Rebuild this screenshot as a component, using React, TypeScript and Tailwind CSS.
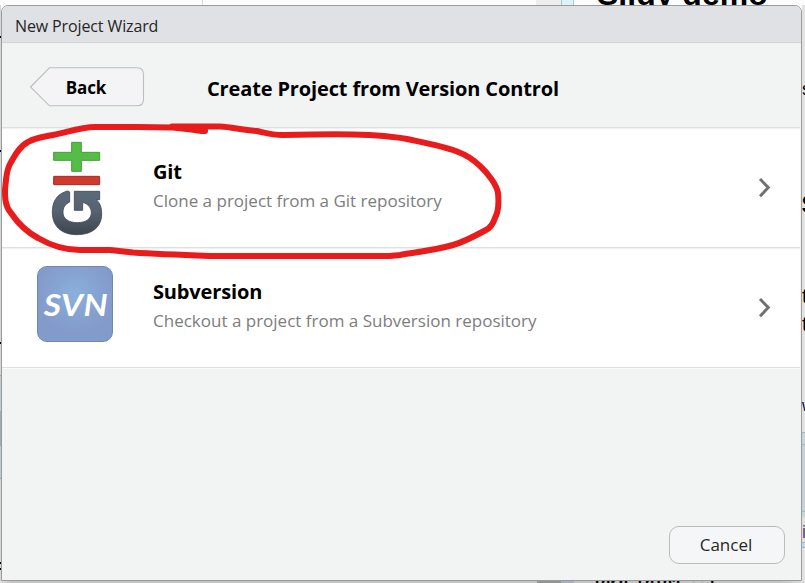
import React from "react";

function Chevron() {
  return (
    <svg width="16" height="22" viewBox="0 0 16 22" className="mr-[27px]" fill="none">
      <path d="M3 2 L11.3 10.6 L3 19.2" stroke="#6f7074" strokeWidth="2.9" />
    </svg>
  );
}

function GitIcon() {
  return (
    <svg width="75" height="105" viewBox="0 0 225 315" className="block">
      <defs>
        <linearGradient id="steel" x1="0" y1="0" x2="0" y2="1">
          <stop offset="0" stopColor="#5b6a7a" />
          <stop offset="0.45" stopColor="#566370" />
          <stop offset="1" stopColor="#3c464f" />
        </linearGradient>
      </defs>
      <path d="M95 22H124V52H179V76H124V109H95V76H41V52H95Z" fill="#55bd46" stroke="#429f35" strokeWidth="3" strokeLinejoin="round" />
      <rect x="41" y="124" width="138" height="25" rx="1" fill="#cf392e" stroke="#a52b22" strokeWidth="3" />
      <path
        d="M89 171C86 167 79 168 74 171C49 180 37 202 37 232C37 273 64 299 110 299C158 299 185 275 185 237C185 219 181 205 169 194H179V169H103V226H128V202C145 207 154 219 154 233C154 251 138 263 112 263C86 263 69 251 69 233C69 217 75 208 89 201Z"
        fill="url(#steel)" stroke="#3e4954" strokeWidth="2.5" strokeLinejoin="round"
      />
    </svg>
  );
}

function SvnIcon() {
  return (
    <div className="flex h-[76px] w-[76px] items-center justify-center rounded-[10px] border border-[#6f86ad] bg-[radial-gradient(circle_at_50%_36%,#8bb0dd_0%,#86a3d1_35%,#839bca_65%)]">
      <span className="scale-x-[1.12] pl-[2px] font-['Lato',sans-serif] text-[30px] font-bold italic leading-none tracking-[0.6px] text-white">SVN</span>
    </div>
  );
}

function Option({ icon, title, detail }: { icon: React.ReactNode; title: string; detail: string }) {
  return (
    <section className="flex h-[120px] shrink-0 items-center border-y border-b-[#dedfdf] border-t-[#f0f1f1] bg-white">
      <div className="flex h-full w-[151px] shrink-0">{icon}</div>
      <div className="flex-1 whitespace-nowrap pb-[3px]">
        <h2 className="text-[20px] font-bold leading-[28px] tracking-[-0.15px] text-black">{title}</h2>
        <p className="text-[17px] leading-[29px] text-[#7d7d7d]">{detail}</p>
      </div>
      <Chevron />
    </section>
  );
}

function TopSliver() {
  return (
    <div className="flex h-[5px] shrink-0 items-end overflow-hidden bg-[#fdfdfd]">
      <div className="h-full w-[203px] border-r border-[#d9d9d9]" />
      <div className="h-full w-[333px]" />
      <div className="h-full w-[25px] bg-[#eeeeee]" />
      <div className="h-full w-[13px] border-x border-[#a5cbd5] bg-[#def2f8]" />
      <span className="mb-[-5px] whitespace-nowrap pl-[23px] text-[32px] font-bold leading-[32px]">Slidy demo</span>
    </div>
  );
}

function LeftSliver() {
  return (
    <div className="flex w-px shrink-0 flex-col bg-[#d6d6d6]">
      <div className="h-[31px]" />
      <div className="h-[2px] bg-black" />
      <div className="h-[112px]" />
      <div className="h-[2px] bg-black" />
      <div className="h-[190px]" />
      <div className="h-[2px] bg-black" />
      <div className="h-[31px]" />
      <div className="h-[36px] border-t border-[#8fa9b8] bg-[#becbd3]" />
      <div className="h-[35px] bg-[#9eabb8]" />
      <div className="h-[33px] border-b border-[#8fa9b8] bg-[#becbd3]" />
      <div className="h-[83px]" />
      <div className="h-[2px] bg-black" />
      <div className="h-[4px]" />
      <div className="h-[2px] bg-black" />
    </div>
  );
}

function RightSliver() {
  return (
    <div className="flex w-[3px] shrink-0 flex-col overflow-hidden bg-[#e2e2e2]">
      <span className="h-[94px] pt-[74px] text-[18px] leading-[20px]">s</span>
      <span className="ml-[-1px] h-[121px] pt-[83px] text-[34px] font-bold leading-[38px]">s</span>
      <span className="h-[87px] pt-[65px] text-[20px] leading-[22px]">t</span>
      <span className="h-[28px] pt-[6px] text-[20px] leading-[22px]">t</span>
      <span className="h-[97px] pt-[62px] text-[16px] leading-[18px] text-[#000050]">w</span>
      <div className="h-[12px] border-t border-[#9dbac6] bg-[#c5d5dc]" />
      <div className="h-[68px] border-y border-[#9dbac6] bg-[#c5d0d8]" />
      <div className="h-[5px] bg-[#c5d5dc]" />
      <span className="h-[25px] bg-[#e2dfdf] pt-[5px] text-[18px] leading-[20px] text-[#6b4567]">i</span>
      <div className="h-[6px] border-y border-[#9dbac6] bg-[#c5d5dc]" />
    </div>
  );
}

function BottomSliver() {
  return (
    <div className="flex h-[2px] shrink-0 items-start overflow-hidden bg-[linear-gradient(to_right,#dedede,#c4c4c4_12px,#c4c4c4_780px,#dedede)]">
      <div className="h-full w-[537px]" />
      <div className="h-full w-[24px] bg-[#949494]" />
      <div className="h-full w-[13px] bg-[#a3b3ba]" />
      <span className="mt-[-3px] whitespace-nowrap pl-[18px] font-['Liberation_Mono',monospace] text-[16px] font-bold leading-[12px] tracking-[-0.8px]">lbrn (hiba,°°)</span>
    </div>
  );
}

function Wizard() {
  return (
    <main className="flex w-[801px] flex-col overflow-hidden rounded-t-[7px] border border-[#999b9d] bg-[#f2f4f3] pr-px font-['Open_Sans','Noto_Sans',sans-serif]">
      <header className="mr-[-1px] flex h-[37px] shrink-0 items-center border-b border-[#d2d3d6] bg-[#e0e1e5] pl-[13px] pt-[3px]">
        <span className="whitespace-nowrap text-[16px] tracking-[-0.12px] text-[#262626]">New Project Wizard</span>
      </header>
      <div className="flex h-[85px] shrink-0 items-center gap-[62px] border-b border-[#dedfdf] pl-[27px] pt-[3px]">
        <button className="grid h-[40px] w-[116px] shrink-0 place-items-center">
          <svg width="116" height="40" viewBox="0 0 116 40" className="col-start-1 row-start-1">
            <path d="M1.5 20 L20.5 0.8 H108 Q114.5 0.8 114.5 7.5 V32 Q114.5 38.8 108 38.8 H20.5 Z" fill="#f4f4f7" stroke="#bcbec0" strokeWidth="1.1" />
          </svg>
          <span className="col-start-1 row-start-1 pr-[2px] pt-[2px] text-[17px] font-bold tracking-[-0.1px] text-black">Back</span>
        </button>
        <h1 className="whitespace-nowrap pt-[5px] text-[20px] font-bold tracking-[-0.14px] text-black">Create Project from Version Control</h1>
      </div>
      <Option icon={<div className="pl-[38px] pt-[6px]"><GitIcon /></div>} title="Git" detail="Clone a project from a Git repository" />
      <Option icon={<div className="pl-[35px] pt-[17px]"><SvnIcon /></div>} title="Subversion" detail="Checkout a project from a Subversion repository" />
      <footer className="flex flex-1 items-end justify-end border-t border-[#fafafa] pb-[16px] pr-[15px]">
        <button className="h-[38px] w-[116px] rounded-[10px] border border-[#b9bbbd] bg-[#f5f6f8] pr-[2px] text-[17px] text-[#262626]">Cancel</button>
      </footer>
    </main>
  );
}

export default function App() {
  return (
    <div className="relative flex h-[583px] w-[805px] flex-col overflow-hidden bg-[#fdfdfd] font-['Liberation_Sans',Arial,sans-serif] text-black">
      <TopSliver />
      <div className="flex h-[576px] shrink-0">
        <LeftSliver />
        <Wizard />
        <RightSliver />
      </div>
      <BottomSliver />
      <svg width="805" height="583" className="pointer-events-none absolute inset-0" fill="none">
        <path
          d="M205 131C194 131 183 127 172 126.5H220C233 127 240 130 257 131C266 133 272 135 283 135C306 134.5 332 134 353 134.5C373 135 391 136 407 139C426 143 443 146 457 151.5C469 156 474 160 480 166C489 174 497 186 498 193C499 203 499 211 495 218C493 224 490 228 486 230C475 236 464 242 453 245C435 250 418 252 400 255L390 256H210C183 255 157 254 133 252.5L110 250H80C63 250 50 245 38 238C27 232 17 222 11 213C5 206 5 198 5 190C6 180 6 171 10 164C15 155 20 146 28 142C35 138 43 137 50 135.5C65 133 80 127 95 127H137L173 127.5L205 131"
          stroke="#e81c1c" strokeWidth="6" strokeLinecap="round" strokeLinejoin="round"
        />
      </svg>
    </div>
  );
}
